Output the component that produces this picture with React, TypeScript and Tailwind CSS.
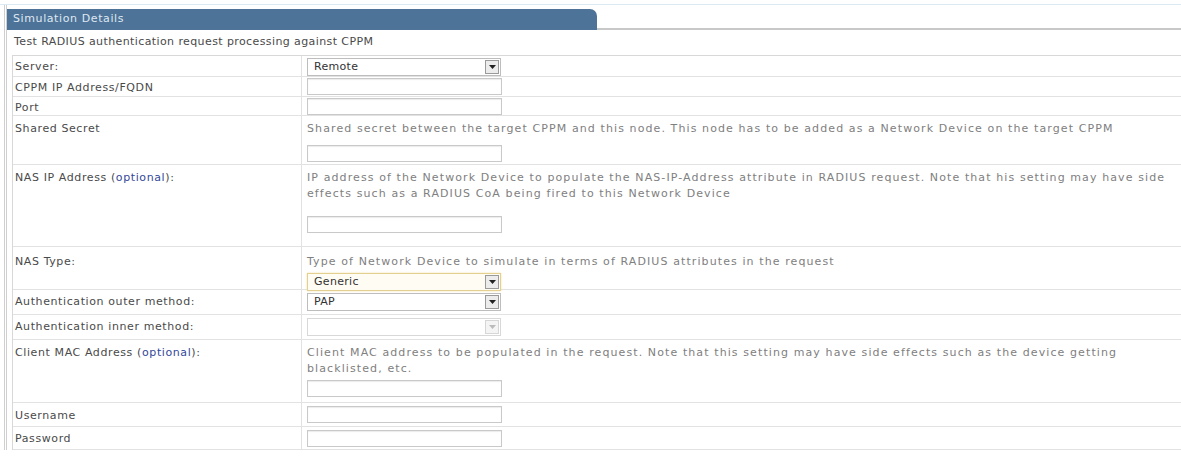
import React from "react";

const font = { fontFamily: '"DejaVu Sans", Verdana, sans-serif' };

function TextBox() {
  return <div className="h-[17px] w-[195px] border border-[#c9c9c9] bg-white shadow-[inset_0_1px_1px_rgba(0,0,0,0.08)]" />;
}

function Select({ value, variant }: { value?: string; variant?: "focus" | "disabled" | "normal" }) {
  const outer =
    variant === "focus"
      ? "border-[#e3cf8f] bg-[#fffdf3] shadow-[0_0_2px_#f2e3a8]"
      : variant === "disabled"
      ? "border-[#d8d8d8] bg-white"
      : "border-[#bdbdbd] bg-white";
  return (
    <div className={`flex h-[18px] w-[194px] items-center justify-between border ${outer}`}>
      <span className="pl-[6px] text-[11px] tracking-[0.3px] text-[#333]">{value}</span>
      <div
        className={`mr-[1px] flex h-[14px] w-[14px] items-center justify-center border ${
          variant === "disabled" ? "border-[#d6d6d6] bg-[#f4f4f4]" : "border-[#9a9a9a] bg-[#ececec]"
        }`}
      >
        <svg width="7" height="4" viewBox="0 0 7 4">
          <path d="M0 0h7L3.5 4z" fill={variant === "disabled" ? "#bbbbbb" : "#222"} />
        </svg>
      </div>
    </div>
  );
}

function Row({
  label,
  optional,
  children,
  h,
  labelPt = "pt-[3px]",
  rightPt = "pt-[2px]",
}: {
  label: string;
  optional?: boolean;
  children: React.ReactNode;
  h: string;
  labelPt?: string;
  rightPt?: string;
}) {
  return (
    <div className={`flex border-b border-[#e2e2e2] ${h}`}>
      <div className={`w-[288px] shrink-0 pl-[2px] text-[11px] tracking-[0.6px] text-[#4a4a4a] ${labelPt}`}>
        {label}
        {optional && (
          <>
            {" "}
            (<span className="text-[#33489a]">optional</span>):
          </>
        )}
      </div>
      <div className={`flex-1 border-l border-[#e2e2e2] pl-[5px] ${rightPt}`}>{children}</div>
    </div>
  );
}

function Desc({ children }: { children: React.ReactNode }) {
  return <div className="text-[11px] leading-[16px] tracking-[1.1px] text-[#808080]">{children}</div>;
}

export default function App() {
  return (
    <div className="h-[462px] w-[1181px] overflow-hidden bg-white" style={font}>
      <div className="h-[5px] border-b border-[#dbeaf2]" />
      <div className="ml-[4px] border-l-[3px] border-double border-[#cfcfcf] pt-[4px]">
        <div className="flex h-[21px] items-end">
          <div className="flex h-[21px] w-[590px] items-center rounded-tr-[7px] bg-[#4e7398] pl-[6px] text-[11px] tracking-[0.6px] text-[#dfe8f1]">
            Simulation Details
          </div>
          <div className="h-[21px] flex-1 border-b-2 border-[#c8c8c8]" />
        </div>
        <div className="flex h-[25px] items-center pl-[7px] text-[11px] tracking-[0.4px] text-[#4a4a4a]">
          Test RADIUS authentication request processing against CPPM
        </div>
        <div className="ml-[5px] border-l border-t border-[#d8d8d8]">
          <Row label="Server:" h="h-[21px]">
            <Select value="Remote" />
          </Row>
          <Row label="CPPM IP Address/FQDN" h="h-[20px]" rightPt="pt-[1px]">
            <TextBox />
          </Row>
          <Row label="Port" h="h-[19px]" rightPt="pt-[1px]">
            <TextBox />
          </Row>
          <Row label="Shared Secret" h="h-[49px]" labelPt="pt-[5px]" rightPt="pt-[5px]">
            <Desc>
              Shared secret between the target CPPM and this node. This node has to be added as a Network Device on the target CPPM
            </Desc>
            <div className="mt-[8px]">
              <TextBox />
            </div>
          </Row>
          <Row label="NAS IP Address" optional h="h-[82px]" labelPt="pt-[5px]" rightPt="pt-[5px]">
            <Desc>
              IP address of the Network Device to populate the NAS-IP-Address attribute in RADIUS request. Note that his setting may have side
              <br />
              effects such as a RADIUS CoA being fired to this Network Device
            </Desc>
            <div className="mt-[14px]">
              <TextBox />
            </div>
          </Row>
          <Row label="NAS Type:" h="h-[43px]" labelPt="pt-[7px]" rightPt="pt-[7px]">
            <Desc>Type of Network Device to simulate in terms of RADIUS attributes in the request</Desc>
            <div className="mt-[3px]">
              <Select value="Generic" variant="focus" />
            </div>
          </Row>
          <Row label="Authentication outer method:" h="h-[25px]" labelPt="pt-[4px]" rightPt="pt-[3px]">
            <Select value="PAP" />
          </Row>
          <Row label="Authentication inner method:" h="h-[25px]" labelPt="pt-[4px]" rightPt="pt-[3px]">
            <Select variant="disabled" />
          </Row>
          <Row label="Client MAC Address" optional h="h-[63px]" labelPt="pt-[5px]" rightPt="pt-[5px]">
            <Desc>
              Client MAC address to be populated in the request. Note that this setting may have side effects such as the device getting
              <br />
              blacklisted, etc.
            </Desc>
            <div className="mt-[3px]">
              <TextBox />
            </div>
          </Row>
          <Row label="Username" h="h-[24px]" labelPt="pt-[5px]" rightPt="pt-[3px]">
            <TextBox />
          </Row>
          <Row label="Password" h="h-[23px]" labelPt="pt-[4px]" rightPt="pt-[3px]">
            <TextBox />
          </Row>
        </div>
      </div>
    </div>
  );
}
